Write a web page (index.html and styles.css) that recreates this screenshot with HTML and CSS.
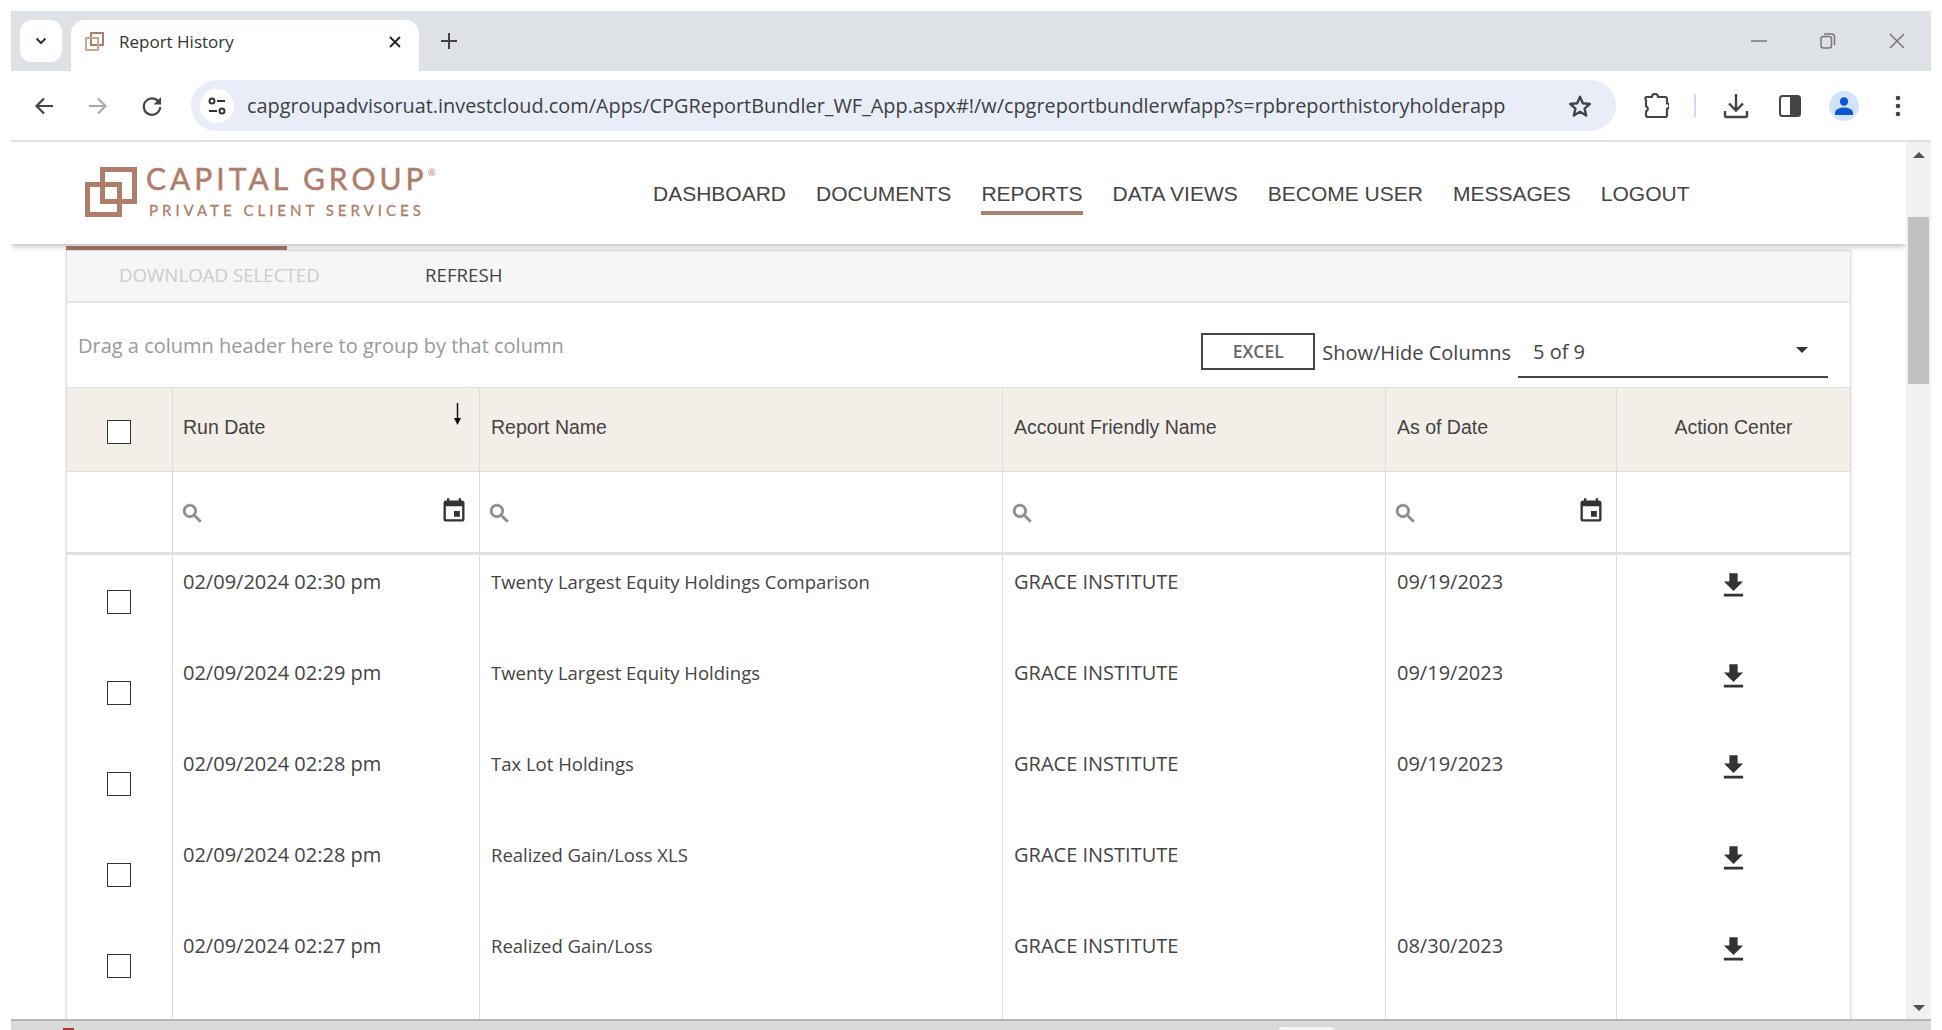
FILE: index.html
```html
<!DOCTYPE html>
<html lang="en">
<head>
<meta charset="utf-8">
<title>Report History</title>
<link rel="stylesheet" href="styles.css">
</head>
<body>
<div class="window">
  <div class="tabstrip">
    <div class="tabsearch">
      <svg class="ic" width="14" height="14" viewBox="0 0 14 14"><path d="M2.500 4.500 7 9l4.500-4.500" fill="none" stroke="#333" stroke-width="2"/></svg>
    </div>
    <div class="tab">
      <svg class="favicon" width="21" height="21" viewBox="0 0 21 21"><rect x="7" y="2" width="12" height="12" fill="none" stroke="#b07d68" stroke-width="2"/><rect x="2" y="7" width="12" height="12" fill="none" stroke="#c9a696" stroke-width="2"/></svg>
      <span class="tabtitle">Report History</span>
      <svg class="tabclose" width="12" height="12" viewBox="0 0 12 12"><path d="M1 1l10 10M11 1 1 11" stroke="#222" stroke-width="1.800"/></svg>
    </div>
    <svg class="newtab" width="16" height="16" viewBox="0 0 16 16"><path d="M8 0v16M0 8h16" stroke="#444" stroke-width="2"/></svg>
    <div class="winctl">
      <svg width="16" height="16" viewBox="0 0 16 16"><path d="M0 8h16" stroke="#777" stroke-width="1.500"/></svg>
      <svg width="16" height="16" viewBox="0 0 16 16"><rect x="1" y="3.500" width="10.500" height="11.500" rx="2.500" fill="none" stroke="#777" stroke-width="1.500"/><path d="M4 1h7.500A3 3 0 0 1 14.500 4v8" fill="none" stroke="#777" stroke-width="1.500"/></svg>
      <svg width="16" height="16" viewBox="0 0 16 16"><path d="M1 1l14 14M15 1 1 15" stroke="#777" stroke-width="1.500"/></svg>
    </div>
  </div>
  <div class="toolbar">
    <svg class="navbtn" width="24" height="24" viewBox="0 0 24 24"><path d="M21 12H5M12 4.500 4.500 12l7.500 7.500" fill="none" stroke="#444" stroke-width="2.200"/></svg>
    <svg class="navbtn" width="24" height="24" viewBox="0 0 24 24"><path d="M3 12h16M12 4.500l7.500 7.500-7.500 7.500" fill="none" stroke="#aaa" stroke-width="2.200"/></svg>
    <svg class="navbtn" width="24" height="24" viewBox="0 0 24 24"><path d="M19.600 9.500A8.200 8.200 0 1 0 20.200 13" fill="none" stroke="#444" stroke-width="2.200"/><path d="M21 3v7.500h-7.500z" fill="#444"/></svg>
    <div class="omnibox">
      <div class="siteinfo">
        <svg width="20" height="20" viewBox="0 0 20 20"><circle cx="5" cy="5" r="2.500" fill="none" stroke="#333" stroke-width="2"/><path d="M10 5h8M2 15h8" stroke="#333" stroke-width="2"/><circle cx="15" cy="15" r="2.500" fill="none" stroke="#333" stroke-width="2"/></svg>
      </div>
      <span class="url">capgroupadvisoruat.investcloud.com/Apps/CPGReportBundler_WF_App.aspx#!/w/cpgreportbundlerwfapp?s=rpbreporthistoryholderapp</span>
      <svg class="star" width="26" height="26" viewBox="0 0 24 24"><path d="M12 3.500l2.600 6 6.500.6-4.900 4.300 1.500 6.400L12 17.400l-5.700 3.400 1.500-6.400-4.900-4.300 6.500-.6z" fill="none" stroke="#444" stroke-width="2.200" stroke-linejoin="round"/></svg>
    </div>
    <div class="tools">
      <svg width="26" height="26" viewBox="0 0 26 26"><path d="M3 4h6a3 3 0 0 1 6 0h7a2 2 0 0 1 2 2v4.500a2.500 2.500 0 0 1 0 5V22a2 2 0 0 1-2 2H5a2 2 0 0 1-2-2v-3.500a3 3 0 0 0 0-5.500V7a2 2 0 0 1 0-3z" fill="none" stroke="#444" stroke-width="2.200" stroke-linejoin="round"/></svg>
      <span class="tooldiv"></span>
      <svg width="26" height="26" viewBox="0 0 26 26"><path d="M13 1v16M6 10.500l7 7 7-7" fill="none" stroke="#444" stroke-width="2.400"/><path d="M2 18v4.500a1.500 1.500 0 0 0 1.500 1.500h19a1.500 1.500 0 0 0 1.500-1.500V18" fill="none" stroke="#444" stroke-width="2.400"/></svg>
      <svg width="22" height="22" viewBox="0 0 22 22"><rect x="1" y="1" width="20" height="20" rx="2.500" fill="#fff" stroke="#444" stroke-width="2"/><path d="M11 1h8a2 2 0 0 1 2 2v16a2 2 0 0 1-2 2h-8z" fill="#444"/></svg>
      <span class="avatar">
        <svg width="22" height="22" viewBox="0 0 22 22"><circle cx="11" cy="6.500" r="4.200" fill="#0b57d0"/><path d="M2 20v-2.500C2 14.500 7 12.500 11 12.500s9 2 9 5V20z" fill="#0b57d0"/></svg>
      </span>
      <svg width="6" height="22" viewBox="0 0 6 22"><circle cx="3" cy="3" r="2.300" fill="#444"/><circle cx="3" cy="11" r="2.300" fill="#444"/><circle cx="3" cy="19" r="2.300" fill="#444"/></svg>
    </div>
  </div>

  <div class="viewport">
    <div class="page">
      <header class="sitenav">
        <div class="logo">
          <svg class="logomark" width="52" height="50" viewBox="0 0 52 50"><rect x="17.500" y="2.500" width="32" height="32" fill="none" stroke="#b07d68" stroke-width="5"/><rect x="2.500" y="17.500" width="32" height="30" fill="none" stroke="#b07d68" stroke-width="5"/></svg>
          <div class="logotext">
            <div class="logo1">CAPITAL GROUP<sup class="reg">®</sup></div>
            <div class="logo2">PRIVATE CLIENT SERVICES</div>
          </div>
        </div>
        <nav class="menu">
          <a>DASHBOARD</a><a>DOCUMENTS</a><a class="active">REPORTS</a><a>DATA VIEWS</a><a>BECOME USER</a><a>MESSAGES</a><a>LOGOUT</a>
        </nav>
      </header>
      <div class="main">
        <div class="accent"></div>
        <div class="grid">
          <div class="actions"><span class="disabled">DOWNLOAD SELECTED</span><span class="refresh">REFRESH</span></div>
          <div class="groupbar">
            <span class="draghint">Drag a column header here to group by that column</span>
            <div class="gridtools">
              <span class="excel">EXCEL</span>
              <span class="showhide">Show/Hide Columns</span>
              <div class="select"><span>5 of 9</span><i class="caret"></i></div>
            </div>
          </div>
          <table class="data">
            <colgroup><col class="c0"><col class="c1"><col class="c2"><col class="c3"><col class="c4"><col class="c5"></colgroup>
            <thead>
              <tr class="head">
                <th class="ck"><span class="check"></span></th>
                <th class="sorted">Run Date<svg class="sort" width="9" height="23" viewBox="0 0 9 23"><path d="M4.500 0v17" stroke="#111" stroke-width="1.500"/><path d="M1 15h7l-3.500 7z" fill="#111"/></svg></th>
                <th class="pad">Report Name</th>
                <th class="pad">Account Friendly Name</th>
                <th class="pad">As of Date</th>
                <th class="ctr">Action Center</th>
              </tr>
              <tr class="filter">
                <td></td>
                <td><div class="fcell"><svg class="mag" width="25" height="25" viewBox="0 0 24 24"><use href="#i-search"/></svg><svg class="cal" width="28" height="28" viewBox="0 0 24 24"><use href="#i-event"/></svg></div></td>
                <td><div class="fcell"><svg class="mag" width="25" height="25" viewBox="0 0 24 24"><use href="#i-search"/></svg></div></td>
                <td><div class="fcell"><svg class="mag" width="25" height="25" viewBox="0 0 24 24"><use href="#i-search"/></svg></div></td>
                <td><div class="fcell"><svg class="mag" width="25" height="25" viewBox="0 0 24 24"><use href="#i-search"/></svg><svg class="cal" width="28" height="28" viewBox="0 0 24 24"><use href="#i-event"/></svg></div></td>
                <td></td>
              </tr>
            </thead>
            <tbody>
              <tr><td class="ck"><span class="check"></span></td><td>02/09/2024 02:30 pm</td><td class="rname pad">Twenty Largest Equity Holdings Comparison</td><td class="pad">GRACE INSTITUTE</td><td class="pad">09/19/2023</td><td class="ctr"><svg class="dl" width="33" height="33" viewBox="0 0 24 24"><use href="#i-dl"/></svg></td></tr>
              <tr><td class="ck"><span class="check"></span></td><td>02/09/2024 02:29 pm</td><td class="rname pad">Twenty Largest Equity Holdings</td><td class="pad">GRACE INSTITUTE</td><td class="pad">09/19/2023</td><td class="ctr"><svg class="dl" width="33" height="33" viewBox="0 0 24 24"><use href="#i-dl"/></svg></td></tr>
              <tr><td class="ck"><span class="check"></span></td><td>02/09/2024 02:28 pm</td><td class="rname pad">Tax Lot Holdings</td><td class="pad">GRACE INSTITUTE</td><td class="pad">09/19/2023</td><td class="ctr"><svg class="dl" width="33" height="33" viewBox="0 0 24 24"><use href="#i-dl"/></svg></td></tr>
              <tr><td class="ck"><span class="check"></span></td><td>02/09/2024 02:28 pm</td><td class="rname pad">Realized Gain/Loss XLS</td><td class="pad">GRACE INSTITUTE</td><td class="pad"></td><td class="ctr"><svg class="dl" width="33" height="33" viewBox="0 0 24 24"><use href="#i-dl"/></svg></td></tr>
              <tr><td class="ck"><span class="check"></span></td><td>02/09/2024 02:27 pm</td><td class="rname pad">Realized Gain/Loss</td><td class="pad">GRACE INSTITUTE</td><td class="pad">08/30/2023</td><td class="ctr"><svg class="dl" width="33" height="33" viewBox="0 0 24 24"><use href="#i-dl"/></svg></td></tr>
              <tr><td></td><td></td><td></td><td></td><td></td><td></td></tr>
            </tbody>
          </table>
        </div>
      </div>
    </div>
    <div class="scrollbar">
      <i class="sb-up"></i>
      <div class="sb-track"><div class="sb-thumb"></div></div>
      <i class="sb-down"></i>
    </div>
  </div>
  <div class="statusbar"><i class="st-red"></i><i class="st-tab"></i></div>
</div>
<svg class="defs" width="0" height="0">
  <defs>
    <path id="i-search" fill="#8a8a8a" stroke="#8a8a8a" stroke-width=".7" d="M15.500 14h-.79l-.28-.27A6.471 6.471 0 0 0 16 9.500 6.500 6.500 0 1 0 9.500 16c1.610 0 3.090-.59 4.230-1.570l.27.28v.79l5 4.990L20.490 19l-4.990-5zm-6 0C7.010 14 5 11.990 5 9.500S7.010 5 9.500 5 14 7.010 14 9.500 11.990 14 9.500 14z"/>
    <path id="i-event" fill="#333" d="M17 12h-5v5h5v-5zM16 1v2H8V1H6v2H5c-1.110 0-1.990.9-1.990 2L3 19c0 1.100.89 2 2 2h14c1.100 0 2-.9 2-2V5c0-1.100-.9-2-2-2h-1V1h-2zm3 18H5V8h14v11z"/>
    <path id="i-dl" fill="#333" d="M19 9h-4V3H9v6H5l7 7 7-7zM5 18v2h14v-2H5z"/>
  </defs>
</svg>
</body>
</html>
```
FILE: styles.css
```css
* { box-sizing: border-box; }
html, body { margin: 0; height: 100%; }
body {
  background: #fff;
  padding: 11px 11px 0;
  overflow: hidden;
  font-family: "Open Sans", "Liberation Sans", sans-serif;
  color: #444;
}
.window { display: flex; flex-direction: column; width: 1920px; height: 1019px; }
.defs { position: absolute; }

/* browser tab strip */
.tabstrip {
  height: 60px;
  background: #dee1e6;
  display: flex;
  align-items: flex-start;
  padding: 9px 0 0 9px;
  flex: none;
}
.tabsearch {
  width: 42px; height: 42px;
  background: #fff;
  border-radius: 12px;
  display: flex; align-items: center; justify-content: center;
  margin-right: 9px;
}
.tab {
  width: 348px; height: 51px;
  background: #fff;
  border-radius: 14px 14px 0 0;
  display: flex;
  align-items: center;
  padding: 0 18px 8px 13px;
}
.favicon { flex: none; }
.tabtitle { margin-left: 14px; font-size: 17px; color: #333; flex: 1; }
.newtab { margin: 13px 0 0 22px; }
.winctl {
  margin-left: auto;
  display: flex;
  gap: 53px;
  padding: 13px 26px 0 0;
}

/* browser toolbar */
.toolbar {
  height: 71px;
  flex: none;
  background: #fff;
  border-radius: 14px 14px 0 0;
  border-bottom: 2px solid #e2e2e2;
  display: flex;
  align-items: center;
  padding: 0 0 0 21px;
}
.navbtn { flex: none; margin-right: 30px; }
.navbtn:nth-child(3) { margin-right: 27px; }
.omnibox {
  width: 1425px; height: 51px;
  background: #e9edf7;
  border-radius: 26px;
  display: flex;
  align-items: center;
  padding: 0 23px 0 9px;
}
.siteinfo {
  width: 34px; height: 34px;
  background: #fff; border-radius: 50%;
  display: flex; align-items: center; justify-content: center;
  flex: none;
}
.url { margin-left: 13px; font-size: 19.870px; color: #3c4043; white-space: nowrap; flex: 1; }
.star { flex: none; }
.tools { display: flex; align-items: center; margin-left: 27px; }
.tools > svg:nth-child(1) { margin-right: 25px; }
.tooldiv { width: 2px; height: 23px; background: #c9dcf9; margin-right: 27px; }
.tools > svg:nth-child(3) { margin-right: 30px; }
.tools > svg:nth-child(4) { margin-right: 28px; }
.avatar {
  width: 30px; height: 30px;
  background: #d3e3fd; border-radius: 50%;
  display: flex; align-items: center; justify-content: center;
  margin-right: 36px;
}

/* page */
.viewport { flex: 1; display: flex; min-height: 0; overflow: hidden; }
.page { flex: 1; min-width: 0; overflow: hidden; }
.sitenav {
  height: 102px;
  background: #fff;
  box-shadow: 0 2px 6px rgba(0,0,0,.28);
  display: flex;
  position: relative;
  z-index: 1;
  padding: 25px 0 0 74px;
}
.logo { display: flex; width: 568px; height: 52px; }
.logomark { flex: none; }
.logotext { margin-left: 9px; }
.logo1 {
  font-family: Lato, sans-serif;
  font-size: 30px;
  line-height: 26px;
  letter-spacing: 4px;
  color: #b07d68;
  white-space: nowrap;
  margin-top: -2px;
  -webkit-text-stroke: .5px #b07d68;
}
.reg { font-size: 10px; vertical-align: 14px; line-height: 0; letter-spacing: 0; -webkit-text-stroke: 0; }
.logo2 {
  font-family: Lato, sans-serif;
  font-size: 15px;
  line-height: 18px;
  letter-spacing: 4px;
  color: #b07d68;
  white-space: nowrap;
  margin: 10px 0 0 3px;
  -webkit-text-stroke: .3px #b07d68;
}
.menu { display: flex; gap: 30px; font-family: "Liberation Sans", Arial, sans-serif; font-size: 21px; color: #444; }
.menu a { display: block; height: 48px; line-height: 28px; padding-top: 13px; }
.menu .active { border-bottom: 4px solid #a88373; }

.main { padding: 2px 55px 0; }
.accent { width: 221px; height: 4px; background: #a87b67; }
.grid {
  border-left: 1px solid #ddd;
  border-right: 1px solid #ddd;
  box-shadow: 0 0 4px rgba(0,0,0,.12);
}
.actions {
  height: 53px;
  background: #f5f6f8;
  border-top: 1px solid #ddd;
  border-bottom: 2px solid #e4e4e4;
  display: flex;
  align-items: center;
  padding: 0 0 3px 52px;
  font-size: 18.700px;
}
.disabled { color: #ccc; width: 306px; }
.refresh { color: #444; }
.groupbar {
  height: 84px;
  display: flex;
  align-items: flex-start;
  justify-content: space-between;
  padding: 30px 22px 0 11px;
}
.draghint { color: #999; font-size: 20px; line-height: 27px; margin-top: -1px; }
.gridtools { display: flex; align-items: flex-start; }
.excel {
  width: 114px; height: 37px;
  border: 2px solid #444;
  display: flex; align-items: center; justify-content: center;
  font-size: 17.500px; font-weight: 600; color: #666;
  margin-right: 7px;
  padding-bottom: 2px;
}
.showhide { font-size: 20px; line-height: 27px; color: #444; margin: 6px 7px 0 0; }
.select {
  width: 310px; height: 45px;
  border-bottom: 2px solid #444;
  display: flex; align-items: flex-start; justify-content: space-between;
  padding: 5px 20px 0 15px;
  font-size: 20px;
  line-height: 27px;
}
.caret { width: 0; height: 0; border: 6px solid transparent; border-top: 6px solid #333; border-bottom: 0; margin-top: 9px; }

/* data table */
.data { border-spacing: 0; table-layout: fixed; width: 1783px; }
.c0 { width: 106px; }
.c1 { width: 307px; }
.c2 { width: 523px; }
.c3 { width: 383px; }
.c4 { width: 231px; }
.c5 { width: 233px; }
.data th, .data td { border-right: 1px solid #ddd; padding: 0 0 0 10px; }
.data th.pad, .data td.pad { padding-left: 11px; }
.data th:last-child, .data td:last-child { border-right: 0; }
.head th {
  height: 85px;
  background: #f3eee8;
  border-top: 1px solid #ddd;
  border-bottom: 1px solid #ddd;
  font-family: "Liberation Sans", Arial, sans-serif;
  font-weight: 400;
  font-size: 19.500px;
  text-align: left;
  color: #444;
  padding-bottom: 5px;
}
.data th.ctr, .data td.ctr { text-align: center; padding-left: 0; }
.data th.ck, .data td.ck { text-align: center; padding: 0 2px 0 0; }
.sorted { position: relative; }
.sort { position: absolute; top: 15px; right: 17px; }
.filter td { height: 83px; border-bottom: 3px solid #e0e0e0; }
.fcell { display: flex; align-items: center; justify-content: space-between; padding-right: 11px; margin-top: 3px; }
.mag { margin-left: -3px; }
.cal { margin-top: -6px; }
tbody td { height: 91px; vertical-align: top; font-size: 20px; line-height: 27px; color: #444; padding-top: 13px !important; white-space: nowrap; }
tbody td.rname { font-size: 18.500px; }
.data td.ck { padding-top: 0 !important; }
.check { display: block; width: 24px; height: 24px; border: 1px solid #333; background: #fff; margin: 0 auto; }
.head .check { margin-top: 4px; }
tbody .check { margin-top: 35px; }
.dl { display: block; margin: 1px auto 0; }

/* scrollbar */
.scrollbar { width: 25px; flex: none; background: #f1f1f1; display: flex; flex-direction: column; align-items: center; }
.sb-up { width: 0; height: 0; border: 6px solid transparent; border-bottom: 6px solid #505050; border-top: 0; margin-top: 10px; flex: none; }
.sb-track { flex: 1; width: 100%; padding: 59px 2px 0; }
.sb-thumb { height: 167px; background: #c1c1c1; }
.sb-down { width: 0; height: 0; border: 6px solid transparent; border-top: 6px solid #505050; border-bottom: 0; margin-bottom: 8px; flex: none; }

/* strip below the window */
.statusbar {
  height: 11px;
  flex: none;
  background: #d9d9d9;
  border-top: 2px solid #b5b5b5;
  display: flex;
  align-items: flex-end;
  position: relative;
}
.st-red { width: 11px; height: 2px; background: #b5342f; margin-left: 52px; }
.st-tab { width: 55px; height: 3px; background: #f4f4f4; border-radius: 4px 4px 0 0; margin-left: 1205px; }
```
